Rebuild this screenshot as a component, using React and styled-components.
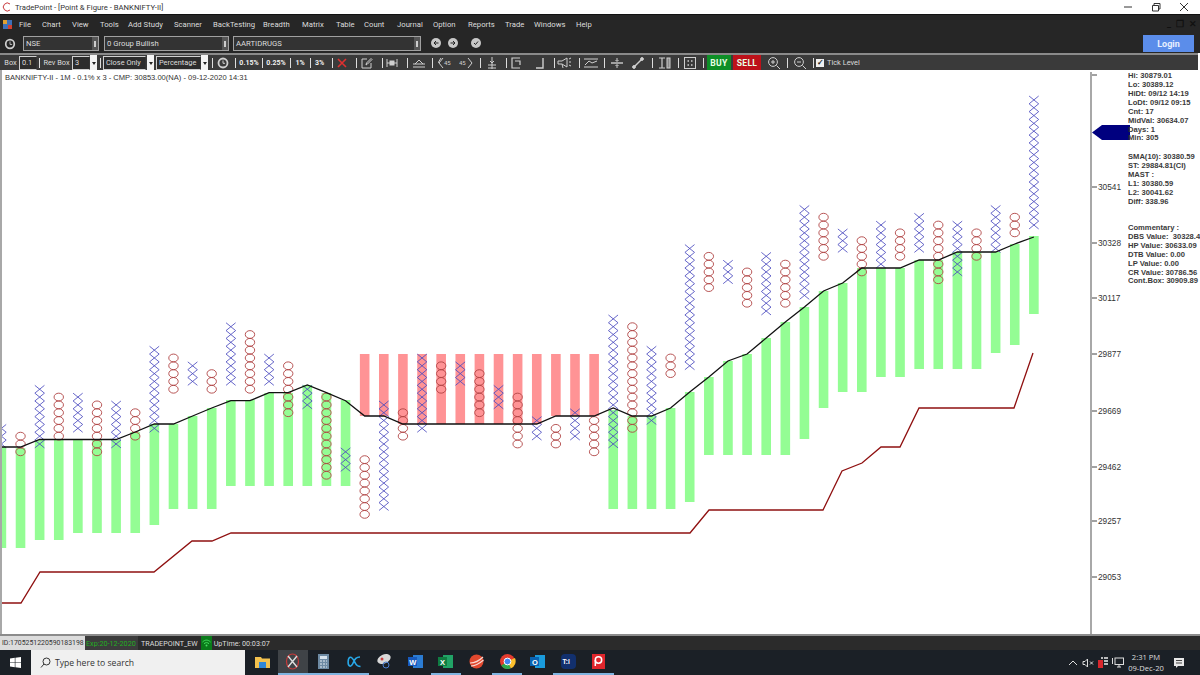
import React from 'react'
import styled, { createGlobalStyle } from 'styled-components'

const GlobalStyle = createGlobalStyle`
  html, body { margin: 0; padding: 0; background: #fff; }
  #root { width: 1200px; height: 675px; overflow: hidden; }
`

const Page = styled.div`
  width: 1200px;
  height: 675px;
  display: flex;
  flex-direction: column;
  font-family: Roboto, 'Liberation Sans', sans-serif;
  overflow: hidden;
`

const TitleBar = styled.div`
  height: 14px;
  flex: none;
  display: flex;
  align-items: center;
  padding-left: 2px;
  background: #fff;
  color: #333;
  font-size: 7.7px;
  gap: 3px;
`

const WindowButtons = styled.div`
  margin-left: auto;
  display: flex;
  width: 66px;
  margin-right: 11px;
  justify-content: space-between;
  color: #333;
`

const MenuBar = styled.div`
  height: 21px;
  flex: none;
  display: flex;
  align-items: center;
  padding: 0 0 2px 3px;
  background: #262626;
  border-top: 1px solid #111;
  box-sizing: border-box;
  color: #ddd;
  font-size: 7.7px;
`

const MenuItem = styled.span`
  flex: none;
  width: ${(p) => p.$w}px;
`

const MiniControls = styled.div`
  margin-left: auto;
  display: flex;
  gap: 5px;
  padding-right: 3px;
  color: #111;
  font-size: 9px;
  font-weight: 700;
`

const SelectorBar = styled.div`
  height: 17px;
  flex: none;
  display: flex;
  align-items: flex-start;
  padding: 1px 6px 0 4px;
  background: #262626;
`

const Combo = styled.div`
  width: ${(p) => p.$w}px;
  height: 15px;
  margin-left: ${(p) => p.$ml}px;
  box-sizing: border-box;
  border: 1px solid #a0a0a0;
  background: #333;
  color: #ddd;
  font-size: 7.7px;
  display: flex;
  align-items: center;
  padding-left: 2px;
  position: relative;
`

const ComboArrow = styled.span`
  margin-left: auto;
  width: 6px;
  height: 13px;
  background: #555;
  display: flex;
  align-items: center;
  justify-content: center;
  &::after {
    content: '';
    width: 2px;
    height: 6px;
    background: #ccc;
  }
`

const RoundButton = styled.div`
  width: 10px;
  height: 10px;
  margin-top: 2px;
  margin-left: ${(p) => p.$ml}px;
  border-radius: 50%;
  background: #c8c8c8;
  display: flex;
  align-items: center;
  justify-content: center;
`

const LoginButton = styled.div`
  margin-left: auto;
  margin-top: -1px;
  width: 51px;
  height: 17px;
  background: #5b8dea;
  color: #e8f0ff;
  font-size: 9px;
  font-weight: 700;
  display: flex;
  align-items: center;
  justify-content: center;
`

const ToolBar = styled.div`
  height: 15px;
  flex: none;
  margin-right: 2px;
  display: flex;
  align-items: center;
  background: #3a3a3a;
  border-top: 2px solid #8a8a8a;
  padding-left: 4px;
  color: #ddd;
  font-size: 7.4px;
  white-space: nowrap;
`

const ToolLabel = styled.span`
  flex: none;
  margin-left: ${(p) => p.$ml || 0}px;
  width: ${(p) => p.$w}px;
  font-weight: ${(p) => (p.$bold ? 700 : 400)};
  font-size: ${(p) => (p.$bold ? 7 : 7.4)}px;
  color: ${(p) => (p.$bold ? '#f0f0f0' : '#ddd')};
  text-align: center;
`

const ToolInput = styled.div`
  flex: none;
  margin-left: ${(p) => p.$ml || 0}px;
  width: ${(p) => p.$w}px;
  height: 14px;
  box-sizing: border-box;
  border: 1px solid #d0d0d0;
  border-right-color: #333;
  background: #2c2c2c;
  padding-left: 2px;
  line-height: 12px;
`

const ToolDrop = styled.div`
  flex: none;
  margin-left: ${(p) => p.$ml || 0}px;
  width: 7px;
  height: 15px;
  background: #f4f4f4;
  display: flex;
  align-items: center;
  justify-content: center;
  &::after {
    content: '';
    border: 2px solid transparent;
    border-top: 3px solid #222;
    margin-top: 3px;
  }
`

const Sep = styled.span`
  flex: none;
  margin-left: ${(p) => p.$ml}px;
  width: 1px;
  height: 10px;
  background: #ddd;
`

const ToolIcon = styled.svg`
  flex: none;
  width: 14px;
  height: 14px;
  margin-left: ${(p) => p.$ml}px;
  fill: none;
  stroke: ${(p) => p.$stroke || '#cfcfcf'};
  stroke-width: 1;
`

const TradeButton = styled.div`
  flex: none;
  margin-left: ${(p) => p.$ml}px;
  width: ${(p) => p.$w}px;
  height: 15px;
  background: ${(p) => p.$bg};
  color: #e8ffe8;
  font-size: 8.6px;
  font-weight: 700;
  letter-spacing: 0.3px;
  display: flex;
  align-items: center;
  justify-content: center;
`

const CheckBox = styled.span`
  flex: none;
  margin-left: 2px;
  width: 8px;
  height: 8px;
  background: #f0f0f0;
  color: #222;
  font-size: 8px;
  line-height: 8px;
  text-align: center;
  font-weight: 700;
`

const ChartArea = styled.div`
  flex: 1;
  min-height: 0;
  display: flex;
  position: relative;
  background: #fff;
  border-left: 2px solid #a8a8a8;
  font-family: 'Liberation Sans', Arial, sans-serif;
`

const ChartTitle = styled.div`
  position: absolute;
  left: 3px;
  top: 3px;
  font-size: 7.55px;
  color: #333;
  white-space: nowrap;
`

const Plot = styled.svg`
  flex: none;
  width: 1124px;
  height: 564px;
  display: block;
`

const ArrowMark = styled.svg`
  position: absolute;
  left: 1090px;
  top: 55px;
  width: 38px;
  height: 15px;
`

const InfoPanel = styled.div`
  position: relative;
  margin-left: 2px;
  padding-top: 2px;
  flex: 1;
  overflow: hidden;
  font-size: 7.6px;
  line-height: 8.92px;
  font-weight: 700;
  color: #3a3a3a;
  white-space: pre;
`

const InfoGroup = styled.div`
  margin-bottom: ${(p) => p.$gap}px;
`

const StatusBar = styled.div`
  height: 16px;
  flex: none;
  display: flex;
  align-items: center;
  background: #2b2b2b;
  border-top: 2px solid #8c8c8c;
  box-sizing: border-box;
  color: #ddd;
  font-size: 7.2px;
  white-space: nowrap;
`

const StatusId = styled.span`
  width: 85px;
  height: 100%;
  background: #dcdcdc;
  color: #333;
  display: flex;
  align-items: center;
  padding-left: 2px;
  box-sizing: border-box;
  font-size: 6.9px;
`

const StatusExp = styled.span`
  width: 53px;
  height: 100%;
  background: #3c3c3c;
  color: #22b022;
  display: flex;
  align-items: center;
  padding-left: 1px;
  box-sizing: border-box;
`

const StatusText = styled.span`
  margin-left: ${(p) => p.$ml || 0}px;
`

const WifiBox = styled.span`
  width: 11px;
  height: 100%;
  margin: 0 2px 0 3px;
  background: #0a7a1a;
  display: flex;
  align-items: center;
  justify-content: center;
`

const TaskBar = styled.div`
  height: 25px;
  flex: none;
  display: flex;
  align-items: stretch;
  background: #1b2026;
`

const StartButton = styled.div`
  width: 31px;
  display: flex;
  align-items: center;
  justify-content: center;
`

const SearchBox = styled.div`
  width: 214px;
  background: #f0f0f0;
  color: #333;
  font-family: 'Open Sans', sans-serif;
  font-size: 8.6px;
  display: flex;
  align-items: center;
  gap: 4px;
  padding-left: 9px;
  box-sizing: border-box;
`

const TaskIcons = styled.div`
  display: flex;
  margin-left: 2px;
`

const TaskSlot = styled.div`
  width: 30.6px;
  display: flex;
  align-items: center;
  justify-content: center;
  box-sizing: border-box;
  background: ${(p) => (p.$active ? '#3f4347' : 'transparent')};
  border-bottom: 2px solid ${(p) => (p.$open ? '#7fb4e0' : 'transparent')};
`

const Tray = styled.div`
  margin-left: auto;
  display: flex;
  align-items: center;
  color: #ddd;
`

const TrayIcon = styled.svg`
  margin-left: ${(p) => p.$ml}px;
  margin-right: ${(p) => p.$mr || 0}px;
`

const Clock = styled.div`
  width: 44px;
  text-align: center;
  font-family: 'Open Sans', sans-serif;
  font-size: 7.6px;
  line-height: 11px;
`

// col = [top y of the first mark, number of marks]; odd columns are O, even are X
const columns = [
  [425, 3], [432, 3], [385, 8], [393, 6], [393, 5], [401, 7], [401, 6], [408, 4], [346, 11], [354, 5],
  [362, 3], [369, 3], [323, 8], [331, 8], [354, 4], [362, 7], [385, 3], [393, 11], [447, 3], [455, 8],
  [401, 14], [408, 4], [354, 10], [362, 4], [362, 3], [369, 6], [385, 3], [393, 7], [416, 3], [424, 3],
  [408, 4], [416, 5], [315, 17], [323, 14], [346, 10], [354, 3], [245, 16], [253, 5], [260, 3], [268, 5],
  [253, 8], [261, 6], [206, 12], [213, 6], [229, 3], [237, 5], [221, 6], [229, 4], [213, 5], [221, 8],
  [221, 7], [229, 4], [206, 6], [213, 3], [96, 17],
]

// bar = [top, bottom]
const bars = [
  [447, 548], [448, 548], [440, 540], [440, 540], [440, 533], [440, 533], [440, 533], [432, 533], [424, 525], [424, 509],
  [416, 509], [408, 509], [400, 486], [400, 486], [393, 486], [393, 486], [385, 486], [393, 486], [400, 486], [354, 416],
  [354, 416], [354, 424], [354, 424], [354, 424], [354, 424], [354, 424], [354, 424], [354, 424], [354, 424], [354, 416],
  [354, 416], [354, 416], [410, 509], [416, 509], [416, 509], [408, 509], [392, 502], [377, 455], [361, 455], [354, 455],
  [338, 455], [322, 455], [307, 439], [291, 408], [283, 392], [268, 392], [268, 377], [268, 377], [260, 369], [260, 369],
  [252, 369], [252, 369], [252, 353], [244, 345], [236, 314],
]

const linePoints = [
  447, 447, 439.5, 439.5, 439.5, 439.5, 439.5, 432, 424, 424, 416, 408, 400.7, 400.7, 392.7, 392.7, 385, 392.7, 400.7, 416,
  416, 424, 424, 424, 424, 424, 424, 424, 424, 416, 416, 416, 408, 416, 416, 408, 392, 377, 361, 354,
  338, 322, 307, 291, 283, 268, 268, 268, 260, 260, 252, 252, 252, 244, 237,
]

const redLine = '2,603 21,603 40,572 154,572 192,541 212,541 231,533 690,533 709,510 823,510 842,471 862,463 881,447 900,447 919,408 1014,408 1033,353'
const axisTicks = [
  [187, '30541'], [243, '30328'], [298, '30117'], [354, '29877'], [411, '29669'], [467, '29462'], [521, '29257'], [577, '29053'],
]
const ROW = 7.82
const colX = (i) => 1.4 + i * 19.12
const snapTop = (y) => 96 + Math.round((y - 96) / ROW) * ROW

const FigureMarks = () =>
  columns.map(([top, count], i) => {
    const cx = colX(i)
    const start = snapTop(top)
    return Array.from({ length: count }, (_, r) => {
      const y = start + r * ROW
      return i % 2 ? (
        <ellipse key={`${i}-${r}`} cx={cx} cy={y + ROW / 2} rx={4.7} ry={3.9} fill="none" stroke="#b04444" strokeOpacity="0.9" strokeWidth="1" />
      ) : (
        <path key={`${i}-${r}`} d={`M${cx - 4.8} ${y}L${cx + 4.8} ${y + ROW}M${cx + 4.8} ${y}L${cx - 4.8} ${y + ROW}`} stroke="#4c4cc0" strokeOpacity="0.85" strokeWidth="1" fill="none" />
      )
    })
  })

const Chart = () => (
  <Plot viewBox="2 70 1124 564">
    {bars.map(([top, bottom], i) => (
      <rect key={i} x={colX(i) - 4.8} y={top} width={9.6} height={bottom - top} fill={i >= 19 && i <= 31 ? '#ff9395' : '#94fd94'} />
    ))}
    <FigureMarks />
    <polyline points={linePoints.map((y, i) => `${colX(i)},${y}`).join(' ')} fill="none" stroke="#111" strokeWidth="1.3" />
    <polyline points={redLine} fill="none" stroke="#8f1010" strokeWidth="1.3" />
    <line x1="1091" y1="72" x2="1091" y2="634" stroke="#a8a8a8" strokeWidth="2" />
    <line x1="1092" y1="75" x2="1097" y2="75" stroke="#444" />
    {axisTicks.map(([y, label]) => (
      <g key={label}>
        <line x1="1092" y1={y} x2="1097" y2={y} stroke="#444" />
        <text x="1098" y={y + 3.3} fontSize="8.3" fill="#333">{label}</text>
      </g>
    ))}
  </Plot>
)

const menuItems = [
  ['File', 23], ['Chart', 30], ['View', 28], ['Tools', 28], ['Add Study', 46], ['Scanner', 39], ['BackTesting', 50], ['Breadth', 39],
  ['Matrix', 34], ['Table', 28], ['Count', 33], ['Journal', 36], ['Option', 35], ['Reports', 37], ['Trade', 29], ['Windows', 42], ['Help', 20],
]

const Icon = ({ ml, children, stroke }) => (
  <ToolIcon $ml={ml} $stroke={stroke} viewBox="0 0 14 14">
    {children}
  </ToolIcon>
)

const Tools = () => (
  <>
    <ToolLabel $w={13}>Box</ToolLabel>
    <ToolInput $ml={2} $w={18}>0.1</ToolInput>
    <Sep $ml={2} />
    <ToolLabel $ml={3} $w={27}>Rev Box</ToolLabel>
    <ToolInput $ml={2} $w={18}>3</ToolInput>
    <ToolDrop />
    <Sep $ml={3} />
    <ToolInput $ml={2} $w={43}>Close Only</ToolInput>
    <ToolDrop $ml={1} />
    <ToolInput $ml={2} $w={45}>Percentage</ToolInput>
    <ToolDrop />
    <Sep $ml={4} />
    <Icon ml={3}><circle cx="7" cy="7" r="4.5" strokeWidth="1.8" /><path d="M7 4.5V7.3H9" /></Icon>
    <Sep $ml={5} />
    <ToolLabel $ml={3} $w={20} $bold>0.15%</ToolLabel>
    <Sep $ml={3} />
    <ToolLabel $ml={3} $w={20} $bold>0.25%</ToolLabel>
    <Sep $ml={4} />
    <ToolLabel $ml={4} $w={10} $bold>1%</ToolLabel>
    <Sep $ml={5} />
    <ToolLabel $ml={4} $w={9} $bold>3%</ToolLabel>
    <Sep $ml={8} />
    <Icon ml={2} stroke="#e03030"><path d="M3 3L11 11M11 3L3 11" strokeWidth="1.6" /></Icon>
    <Sep $ml={7} />
    <Icon ml={3}><path d="M11 7V12H2V3H7M6 9L6.5 7L11 2.5L12 3.5L7.5 8Z" /></Icon>
    <Sep $ml={8} />
    <Icon ml={2}><path d="M2 3V11M12 3V11M2 7H12" /><rect x="5" y="5" width="4" height="4" fill="#cfcfcf" /></Icon>
    <Sep $ml={8} />
    <Icon ml={4}><path d="M1 8H13M1 11H13M7 4L3 8M7 4L11 8" /></Icon>
    <Sep $ml={6} />
    <Icon ml={5}><path d="M5 2L1 7L5 12M3 2L0 7" /><text x="6" y="9" fontSize="6" fill="#cfcfcf" stroke="none">45</text></Icon>
    <Icon ml={7}><path d="M9 2L13 7L9 12" /><text x="0" y="9" fontSize="6" fill="#cfcfcf" stroke="none">45</text></Icon>
    <Sep $ml={7} />
    <Icon ml={4}><path d="M7 1V13M3 9H11M3 12H11M5 5L7 7L9 5" /></Icon>
    <Sep $ml={7} />
    <Icon ml={2}><path d="M11 2H3V12H11M6 5H11V9" strokeWidth="1.2" /></Icon>
    <Icon ml={10}><path d="M10 2V12H3" strokeWidth="1.4" /></Icon>
    <Sep $ml={7} />
    <Icon ml={2}><path d="M1 5H5L10 2V11L5 8H1ZM5 8L6 12M12 3L14 2M12 6H14M12 9L14 10" /></Icon>
    <Sep $ml={8} />
    <Icon ml={4}><path d="M0 3H14M0 11H14M1 9L5 5L8 7L13 5" /></Icon>
    <Sep $ml={6} />
    <Icon ml={5}><path d="M1 7H13" strokeWidth="1.4" /><path d="M7 2V5M5.5 4L7 5.5L8.5 4M7 12V9M5.5 10L7 8.5L8.5 10" /></Icon>
    <Icon ml={7}><path d="M3 11L11 3" strokeWidth="1.4" /><circle cx="3" cy="11" r="1.4" fill="#cfcfcf" /><circle cx="11" cy="3" r="1.4" fill="#cfcfcf" /></Icon>
    <Sep $ml={7} />
    <Icon ml={4}><path d="M2 2H8M2 12H8M5 2V12" strokeWidth="1.2" /><rect x="10" y="2" width="3" height="10" fill="#888" /></Icon>
    <Sep $ml={7} />
    <Icon ml={4}><rect x="1.5" y="1.5" width="11" height="11" /><path d="M4.5 5H6M8 5H9.5M4.5 9H6M8 9H9.5" strokeWidth="1.5" /></Icon>
    <Sep $ml={6} />
    <TradeButton $ml={3} $w={24} $bg="#0d8f26">BUY</TradeButton>
    <TradeButton $ml={2} $w={28} $bg="#bd1119">SELL</TradeButton>
    <Icon ml={6}><circle cx="6" cy="6" r="4.4" /><path d="M9.5 9.5L13 13M4 6H8M6 4V8" /></Icon>
    <Sep $ml={6} />
    <Icon ml={5}><circle cx="6" cy="6" r="4.4" /><path d="M9.5 9.5L13 13M4 6H8" /></Icon>
    <Sep $ml={6} />
    <CheckBox>✓</CheckBox>
    <ToolLabel $ml={3} $w={32}>Tick Level</ToolLabel>
  </>
)

const infoGroups = [
  [10, ['Hi: 30879.01', 'Lo: 30389.12', 'HiDt: 09/12 14:19', 'LoDt: 09/12 09:15', 'Cnt: 17', 'MidVal: 30634.07', 'Days: 1', 'Min: 305']],
  [17, ['SMA(10): 30380.59', 'ST: 29884.81(CI)', 'MAST :', 'L1: 30380.59', 'L2: 30041.62', 'Diff: 338.96']],
  [0, ['Commentary :', 'DBS Value:  30328.4', 'HP Value: 30633.09', 'DTB Value: 0.00', 'LP Value: 0.00', 'CR Value: 30786.56', 'Cont.Box: 30909.89']],
]

const taskIcons = [
  { art: <><path d="M1 4H7L8 5.5H16V15H1Z" fill="#f2c14e" /><rect x="5" y="9" width="7" height="6" fill="#2f86d6" /></> },
  { active: true, open: true, art: <><ellipse cx="8.5" cy="8.5" rx="6" ry="7.5" fill="none" stroke="#c63a3a" strokeWidth="1.2" /><path d="M4 3L13 14M13 3L4 14" stroke="#ddd" strokeWidth="1.4" /></> },
  { open: true, art: <><rect x="3" y="1" width="11" height="15" fill="#6d8aa3" /><rect x="5" y="3" width="7" height="3" fill="#d8e4ee" /><path d="M5 8H7M8 8H10M11 8H12M5 11H7M8 11H10M11 11H12M5 14H7M8 14H10M11 14H12" stroke="#e4ebf1" /></> },
  { open: true, art: <path d="M14 4C10 4 9 6 7.5 9C6.5 12 5 13.5 3.8 13C1.5 12.5 1.5 5 4.2 4.3C6.5 3.8 8 8 9.5 10.5C10.5 12.5 12 13.5 14.5 13.5" fill="none" stroke="#28a8e8" strokeWidth="1.6" /> },
  { art: <><ellipse cx="8" cy="6" rx="7" ry="4.5" fill="#d9d9d9" transform="rotate(-25 8 6)" /><circle cx="10" cy="12" r="3" fill="none" stroke="#4a7fd0" /><circle cx="6" cy="6" r="1.5" fill="#c94040" /></> },
  { art: <><rect x="6" y="2" width="10" height="13" fill="#2b7cd3" /><rect x="1" y="4" width="9" height="9" fill="#185abd" /><text x="2.2" y="11.5" fontSize="7.5" fontWeight="700" fill="#fff" fontFamily="Liberation Sans">W</text></> },
  { open: true, art: <><rect x="6" y="2" width="10" height="13" fill="#21a366" /><rect x="1" y="4" width="9" height="9" fill="#107c41" /><text x="3" y="11.5" fontSize="7.5" fontWeight="700" fill="#fff" fontFamily="Liberation Sans">X</text></> },
  { art: <><circle cx="8.5" cy="8.5" r="7" fill="#e0482e" /><path d="M2 10C6 10 11 8 15 4M3 13C7 13 12 10 15.5 7" stroke="#f8d8d0" strokeWidth="1.2" fill="none" /></> },
  { open: true, art: <><circle cx="8.5" cy="8.5" r="7.5" fill="#e33b2e" /><path d="M8.5 8.5L2.2 12.5A7.5 7.5 0 0 0 12 15.2Z" fill="#2da94f" /><path d="M8.5 8.5L12 15.2A7.5 7.5 0 0 0 15.9 5Z" fill="#fbc02d" /><circle cx="8.5" cy="8.5" r="3.4" fill="#4286f5" stroke="#fff" /></> },
  { art: <><rect x="6" y="2" width="10" height="13" fill="#1a9bdc" /><rect x="1" y="4" width="9" height="9" fill="#0a62b0" /><text x="3" y="11.5" fontSize="7.5" fontWeight="700" fill="#fff" fontFamily="Liberation Sans">O</text></> },
  { open: true, art: <><rect x="1" y="1" width="15" height="15" rx="4" fill="#12306e" /><text x="2.5" y="11" fontSize="6.5" fontWeight="700" fill="#fff" fontFamily="Liberation Sans">T:I</text></> },
  { open: true, art: <><rect x="2" y="1" width="13" height="15" fill="#e0262c" /><circle cx="8.5" cy="7" r="3.2" fill="none" stroke="#fff" strokeWidth="1.5" /><path d="M5.3 7V13" stroke="#fff" strokeWidth="1.5" /></> },
]

const App = () => (
  <Page>
    <GlobalStyle />
    <TitleBar>
      <svg width="10" height="10" viewBox="0 0 10 10"><path d="M8 2A4 4 0 1 0 8 8" fill="none" stroke="#c8383c" strokeWidth="1" /></svg>
      <span>TradePoint - [Point &amp; Figure - BANKNIFTY-II]</span>
      <WindowButtons>
        <svg width="10" height="10" viewBox="0 0 10 10"><path d="M1 5H9" stroke="#333" /></svg>
        <svg width="10" height="10" viewBox="0 0 10 10"><path d="M1.5 3.5H7.5V9H1.5ZM3 3.5V1.5H9V7H7.5" fill="none" stroke="#333" /></svg>
        <svg width="10" height="10" viewBox="0 0 10 10"><path d="M1 1L9 9M9 1L1 9" stroke="#333" /></svg>
      </WindowButtons>
    </TitleBar>
    <MenuBar>
      <svg width="9" height="9" viewBox="0 0 9 9" style={{ flex: 'none', marginRight: 7 }}>
        <rect width="9" height="9" fill="#3d6fb8" /><rect x="0" y="0" width="4" height="4" fill="#e0a030" /><rect x="5" y="5" width="4" height="4" fill="#d04030" />
      </svg>
      {menuItems.map(([label, w]) => (
        <MenuItem key={label} $w={w}>{label}</MenuItem>
      ))}
      <MiniControls><span>_</span><span>❐</span><span>✕</span></MiniControls>
    </MenuBar>
    <SelectorBar>
      <svg width="12" height="12" viewBox="0 0 14 14" style={{ marginTop: 2 }}>
        <circle cx="7" cy="7" r="5" fill="none" stroke="#cfcfcf" strokeWidth="2" /><path d="M7 4V7.5H9.5" fill="none" stroke="#cfcfcf" />
      </svg>
      <Combo $ml={7} $w={76}>NSE<ComboArrow /></Combo>
      <Combo $ml={5} $w={125}>0 Group Bullish<ComboArrow /></Combo>
      <Combo $ml={4} $w={188}>AARTIDRUGS<ComboArrow /></Combo>
      <RoundButton $ml={10}><svg width="6" height="6" viewBox="0 0 6 6"><path d="M5.5 3H1M3 1L1 3L3 5" fill="none" stroke="#222" /></svg></RoundButton>
      <RoundButton $ml={7}><svg width="6" height="6" viewBox="0 0 6 6"><path d="M.5 3H5M3 1L5 3L3 5" fill="none" stroke="#222" /></svg></RoundButton>
      <RoundButton $ml={13}><svg width="6" height="6" viewBox="0 0 6 6"><path d="M1 3L2.5 4.5L5 1.5" fill="none" stroke="#222" /></svg></RoundButton>
      <LoginButton>Login</LoginButton>
    </SelectorBar>
    <ToolBar>
      <Tools />
    </ToolBar>
    <ChartArea>
      <Chart />
      <ChartTitle>BANKNIFTY-II - 1M - 0.1% x 3 - CMP: 30853.00(NA) - 09-12-2020 14:31</ChartTitle>
      <ArrowMark viewBox="0 0 38 15"><path d="M0 7.5L10 0H38V15H10Z" fill="#00007f" /></ArrowMark>
      <InfoPanel>
        {infoGroups.map(([gap, lines]) => (
          <InfoGroup key={lines[0]} $gap={gap}>
            {lines.map((line) => <div key={line}>{line}</div>)}
          </InfoGroup>
        ))}
      </InfoPanel>
    </ChartArea>
    <StatusBar>
      <StatusId>ID:1705251220590183198</StatusId>
      <StatusExp>Exp:20-12-2020</StatusExp>
      <StatusText $ml={3}>TRADEPOINT_EW</StatusText>
      <WifiBox>
        <svg width="9" height="8" viewBox="0 0 9 8"><path d="M.5 3C3 .5 6 .5 8.5 3M2 4.7C3.5 3.3 5.5 3.3 7 4.7" fill="none" stroke="#45e060" /><circle cx="4.5" cy="6.5" r="1" fill="#45e060" /></svg>
      </WifiBox>
      <StatusText>UpTime: 00:03:07</StatusText>
    </StatusBar>
    <TaskBar>
      <StartButton>
        <svg width="11" height="11" viewBox="0 0 11 11"><path d="M0 1.5L4.8 .8V5.2H0ZM5.4 .7L11 0V5.2H5.4ZM0 5.8H4.8V10.2L0 9.5ZM5.4 5.8H11V11L5.4 10.3Z" fill="#fff" /></svg>
      </StartButton>
      <SearchBox>
        <svg width="11" height="11" viewBox="0 0 11 11"><circle cx="6.5" cy="4.5" r="3.5" fill="none" stroke="#333" /><path d="M4 7L1 10.5" stroke="#333" /></svg>
        Type here to search
      </SearchBox>
      <TaskIcons>
        {taskIcons.map((item, i) => (
          <TaskSlot key={i} $active={item.active} $open={item.open}>
            <svg width="17" height="17" viewBox="0 0 17 17">{item.art}</svg>
          </TaskSlot>
        ))}
      </TaskIcons>
      <Tray>
        <TrayIcon $ml={0} width="10" height="10" viewBox="0 0 10 10"><path d="M1 7L5 3L9 7" fill="none" stroke="#ddd" /></TrayIcon>
        <TrayIcon $ml={4} width="12" height="10" viewBox="0 0 12 10"><path d="M1 3.5H3L5.5 1V9L3 6.5H1Z" fill="none" stroke="#ddd" /><path d="M8 3.5L11 6.5M11 3.5L8 6.5" stroke="#ddd" /></TrayIcon>
        <TrayIcon $ml={3.5} width="11" height="11" viewBox="0 0 11 11"><rect y="3" width="5" height="8" fill="#d8262c" /><path d="M6 1H10M6 4H10M6 7H10M3 1H5" stroke="#eee" strokeWidth="1.6" /></TrayIcon>
        <TrayIcon $ml={3.5} width="12" height="11" viewBox="0 0 12 11"><rect x="3" y="1" width="8.5" height="6.5" fill="none" stroke="#ddd" /><path d="M7 7.5V10M5 10H9M0.5 1V7" stroke="#ddd" /></TrayIcon>
        <Clock>2:31 PM<br />09-Dec-20</Clock>
        <TrayIcon $ml={5} $mr={15} width="12" height="12" viewBox="0 0 12 12"><path d="M1 1H11V9H5L3 11V9H1Z" fill="#e8e8e8" /><path d="M3 3.5H9M3 6H9" stroke="#444" /></TrayIcon>
      </Tray>
    </TaskBar>
  </Page>
)

export default App
